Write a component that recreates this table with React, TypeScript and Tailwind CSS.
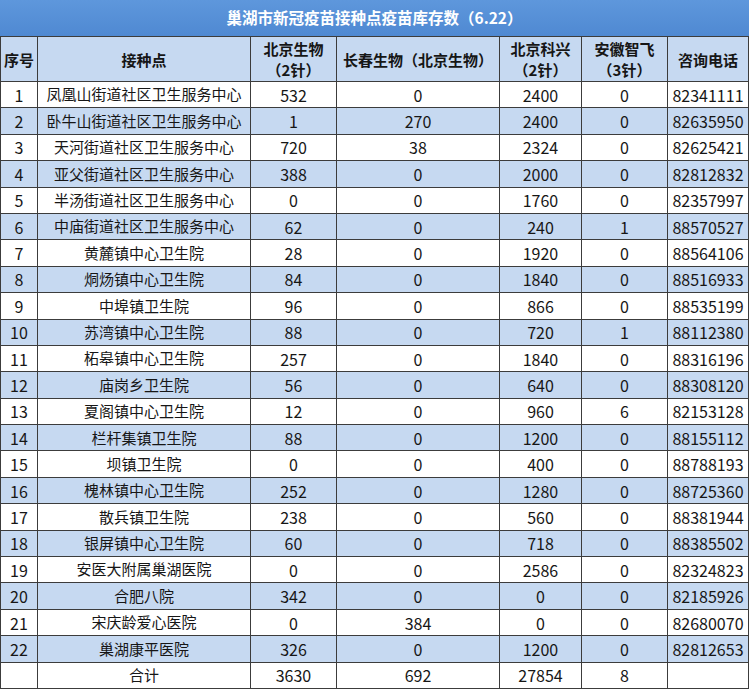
const rows: [string, string, number, number, number, number, string][] = [
  ["1", "凤凰山街道社区卫生服务中心", 532, 0, 2400, 0, "82341111"],
  ["2", "卧牛山街道社区卫生服务中心", 1, 270, 2400, 0, "82635950"],
  ["3", "天河街道社区卫生服务中心", 720, 38, 2324, 0, "82625421"],
  ["4", "亚父街道社区卫生服务中心", 388, 0, 2000, 0, "82812832"],
  ["5", "半汤街道社区卫生服务中心", 0, 0, 1760, 0, "82357997"],
  ["6", "中庙街道社区卫生服务中心", 62, 0, 240, 1, "88570527"],
  ["7", "黄麓镇中心卫生院", 28, 0, 1920, 0, "88564106"],
  ["8", "烔炀镇中心卫生院", 84, 0, 1840, 0, "88516933"],
  ["9", "中埠镇卫生院", 96, 0, 866, 0, "88535199"],
  ["10", "苏湾镇中心卫生院", 88, 0, 720, 1, "88112380"],
  ["11", "柘皋镇中心卫生院", 257, 0, 1840, 0, "88316196"],
  ["12", "庙岗乡卫生院", 56, 0, 640, 0, "88308120"],
  ["13", "夏阁镇中心卫生院", 12, 0, 960, 6, "82153128"],
  ["14", "栏杆集镇卫生院", 88, 0, 1200, 0, "88155112"],
  ["15", "坝镇卫生院", 0, 0, 400, 0, "88788193"],
  ["16", "槐林镇中心卫生院", 252, 0, 1280, 0, "88725360"],
  ["17", "散兵镇卫生院", 238, 0, 560, 0, "88381944"],
  ["18", "银屏镇中心卫生院", 60, 0, 718, 0, "88385502"],
  ["19", "安医大附属巢湖医院", 0, 0, 2586, 0, "82324823"],
  ["20", "合肥八院", 342, 0, 0, 0, "82185926"],
  ["21", "宋庆龄爱心医院", 0, 384, 0, 0, "82680070"],
  ["22", "巢湖康平医院", 326, 0, 1200, 0, "82812653"],
];

function Cell({
  children,
  shaded,
  bold,
  num,
}: {
  children?: React.ReactNode;
  shaded?: boolean;
  bold?: boolean;
  num?: boolean;
}) {
  return (
    <div
      className={`flex items-center justify-center text-center whitespace-nowrap overflow-hidden ${
        shaded ? "bg-[#c6d9f1]" : "bg-white"
      } ${bold ? "font-bold leading-[21px]" : ""} ${num ? "text-[16px]" : ""}`}
    >
      {children}
    </div>
  );
}

export default function App() {
  const total = rows.reduce(
    (acc, r) => [acc[0] + r[2], acc[1] + r[3], acc[2] + r[4], acc[3] + r[5]],
    [0, 0, 0, 0]
  );

  return (
    <div className="w-[749px] h-[689px] bg-white text-[15px] text-[#161616] font-['Noto_Sans_CJK_SC','Noto_Sans',sans-serif]">
      <div className="h-9 flex items-center justify-center bg-gradient-to-b from-[#5e97dc] to-[#4f89d2] text-white font-bold text-[15.5px]">
        巢湖市新冠疫苗接种点疫苗库存数（6.22）
      </div>
      <div className="h-[653px] grid grid-cols-[36px_212px_85px_162px_81px_85px_80px] grid-rows-[44px_repeat(23,minmax(0,1fr))] gap-px p-px bg-[#3c3c3c]">
        <Cell shaded bold>序号</Cell>
        <Cell shaded bold>接种点</Cell>
        <Cell shaded bold>
          <span>北京生物<br />（2针）</span>
        </Cell>
        <Cell shaded bold>长春生物（北京生物）</Cell>
        <Cell shaded bold>
          <span>北京科兴<br />（2针）</span>
        </Cell>
        <Cell shaded bold>
          <span>安徽智飞<br />（3针）</span>
        </Cell>
        <Cell shaded bold>咨询电话</Cell>

        {rows.map((r, i) => {
          const shaded = i % 2 === 1;
          return [
            <Cell key={`${i}-0`} shaded={shaded} num>{r[0]}</Cell>,
            <Cell key={`${i}-1`} shaded={shaded}>{r[1]}</Cell>,
            <Cell key={`${i}-2`} shaded={shaded} num>{r[2]}</Cell>,
            <Cell key={`${i}-3`} shaded={shaded} num>{r[3]}</Cell>,
            <Cell key={`${i}-4`} shaded={shaded} num>{r[4]}</Cell>,
            <Cell key={`${i}-5`} shaded={shaded} num>{r[5]}</Cell>,
            <Cell key={`${i}-6`} shaded={shaded} num>{r[6]}</Cell>,
          ];
        })}

        <Cell />
        <Cell>合计</Cell>
        <Cell num>{total[0]}</Cell>
        <Cell num>{total[1]}</Cell>
        <Cell num>{total[2]}</Cell>
        <Cell num>{total[3]}</Cell>
        <Cell />
      </div>
    </div>
  );
}
